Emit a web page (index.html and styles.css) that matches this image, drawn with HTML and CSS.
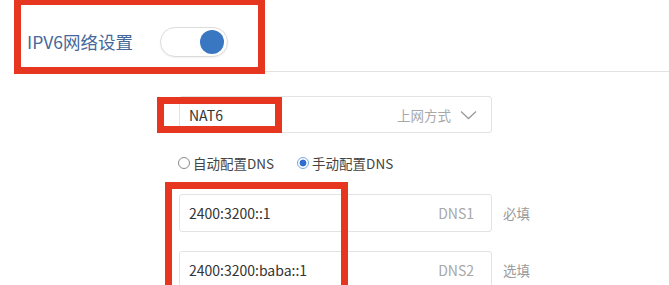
FILE: index.html
```html
<!DOCTYPE html>
<html lang="zh">
<head>
<meta charset="utf-8">
<link rel="stylesheet" href="styles.css">
</head>
<body>
<div class="page">
  <div class="header">
    <span class="title">IPV6网络设置</span>
    <span class="switch"><span class="knob"></span></span>
  </div>
  <div class="form">
    <div class="field select">
      <span class="value">NAT6</span>
      <span class="hint">上网方式</span>
      <svg class="chev" width="17" height="10" viewBox="0 0 17 10"><path d="M1 1.5 L8.5 8.5 L16 1.5" fill="none" stroke="#9a9a9a" stroke-width="1.3"/></svg>
    </div>
    <div class="radios">
      <label class="radio"><span class="dot"></span>自动配置DNS</label>
      <label class="radio on"><span class="dot"></span>手动配置DNS</label>
    </div>
    <div class="row">
      <div class="field"><span class="value">2400:3200::1</span><span class="hint">DNS1</span></div>
      <span class="note">必填</span>
    </div>
    <div class="row">
      <div class="field"><span class="value">2400:3200:baba::1</span><span class="hint">DNS2</span></div>
      <span class="note">选填</span>
    </div>
  </div>
  <div class="mark m1"></div>
  <div class="mark m2"></div>
  <div class="mark m3"></div>
</div>
</body>
</html>
```
FILE: styles.css
```css
html, body {
  margin: 0;
  padding: 0;
  background: #fff;
}
body {
  font-family: "Noto Sans CJK SC", "Noto Sans", sans-serif;
  width: 669px;
  height: 285px;
  overflow: hidden;
}
.page {
  position: relative;
  width: 669px;
  height: 285px;
  overflow: hidden;
}
.header {
  display: flex;
  align-items: center;
  box-sizing: border-box;
  height: 72px;
  margin-left: 14px;
  padding-left: 13px;
  padding-top: 14px;
  padding-bottom: 2px;
  border-bottom: 1px solid #e2e2e2;
}
.title {
  font-size: 17.5px;
  color: #46689a;
}
.switch {
  margin-left: 27px;
  width: 68px;
  height: 30px;
  box-sizing: border-box;
  border: 1px solid #dcdcdc;
  border-radius: 15px;
  background: #fff;
  display: flex;
  align-items: center;
  justify-content: flex-end;
  padding-right: 3px;
  box-shadow: 0 1px 2px rgba(0,0,0,0.06);
}
.knob {
  width: 24px;
  height: 24px;
  border-radius: 50%;
  background: #3a77c2;
}
.form {
  margin-left: 179px;
  padding-top: 24px;
  display: flex;
  flex-direction: column;
}
.field {
  width: 313px;
  height: 37px;
  box-sizing: border-box;
  border: 1px solid #e3e3e3;
  border-radius: 3px;
  display: flex;
  align-items: center;
  padding: 0 17px 0 9px;
  font-size: 14px;
}
.value {
  color: #333;
  flex: 1;
}
.hint {
  color: #a8a8a8;
}
.select .hint {
  font-size: 13.5px;
}
.chev {
  margin-left: 9px;
  margin-right: -3px;
}
.radios {
  display: flex;
  align-items: center;
  height: 20px;
  margin-top: 20px;
  margin-left: -1px;
  font-size: 13.5px;
  color: #444;
  gap: 23px;
}
.radio {
  display: flex;
  align-items: center;
}
.dot {
  width: 12px;
  height: 12px;
  box-sizing: border-box;
  border: 1px solid #8a8a8a;
  border-radius: 50%;
  margin-right: 3px;
  background: #fff;
}
.radio.on .dot {
  border-color: #7aa7e0;
  background: radial-gradient(circle, #2f6fd0 0 3.2px, #fff 3.7px);
}
.row {
  display: flex;
  align-items: center;
  margin-top: 21px;
}
.row + .row {
  margin-top: 19px;
}
.row .field {
  height: 38px;
}
.note {
  margin-left: 11px;
  font-size: 13.5px;
  color: #9a9a9a;
}
.mark {
  position: absolute;
  border: 7px solid #e6361f;
  box-sizing: border-box;
}
.m1 {
  left: 14px;
  top: -2px;
  width: 251px;
  height: 76px;
}
.m2 {
  left: 157px;
  top: 97px;
  width: 125px;
  height: 36px;
}
.m3 {
  left: 165px;
  top: 182px;
  width: 183px;
  height: 103px;
  border-bottom: none;
}
```
